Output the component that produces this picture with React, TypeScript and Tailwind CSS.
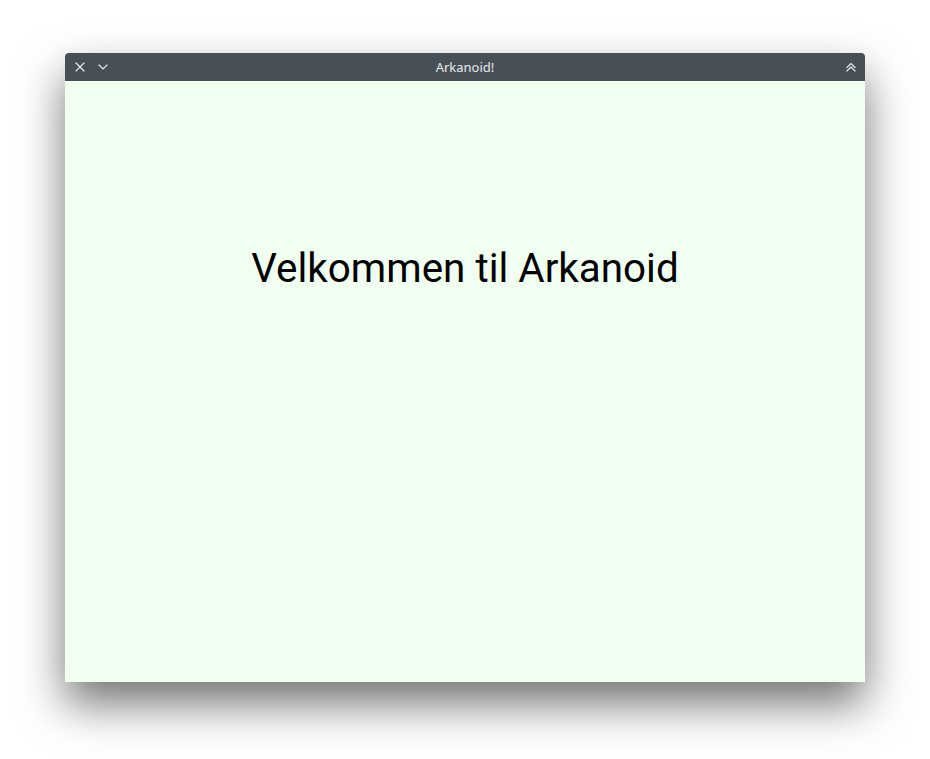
import React from "react";

const TitleIcon = ({ children }: { children: React.ReactNode }) => (
  <svg width="14" height="14" viewBox="0 0 14 14" fill="none" stroke="#eef0f1" strokeWidth="1.2" strokeLinecap="square">
    {children}
  </svg>
);

export default function App() {
  return (
    <div className="w-[930px] h-[759px] bg-white pt-[53px] pl-[65px]">
      <div className="w-[800px] rounded-t-[4px] shadow-[0_22px_45px_rgba(0,0,0,0.55)] flex flex-col">
        {/* title bar */}
        <div className="h-[28px] bg-[#475057] rounded-t-[4px] grid grid-cols-[1fr_auto_1fr] items-center px-[7px]">
          <div className="flex items-center gap-[9px] pl-[1px]">
            <TitleIcon>
              <path d="M3 3 L11 11 M11 3 L3 11" />
            </TitleIcon>
            <TitleIcon>
              <path d="M3 5 L7 9 L11 5" />
            </TitleIcon>
          </div>
          <div className="text-center text-[13px] text-[#e6e8ea] font-['Noto_Sans',sans-serif] leading-none">
            Arkanoid!
          </div>
          <div className="flex justify-end">
            <TitleIcon>
              <path d="M3 7.5 L7 3.5 L11 7.5 M3 11 L7 7 L11 11" />
            </TitleIcon>
          </div>
        </div>
        {/* content */}
        <div className="h-[601px] bg-[#f0fff0] flex flex-col items-center pt-[160px]">
          <h1 className="text-[40.4px] leading-[56px] text-black font-['Roboto',sans-serif] font-normal">
            Velkommen til Arkanoid
          </h1>
        </div>
      </div>
    </div>
  );
}
